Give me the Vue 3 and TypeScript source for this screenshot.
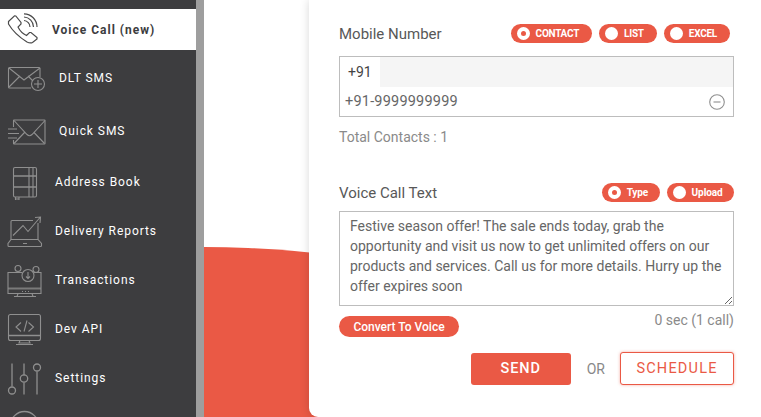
<script setup lang="ts">
const navItems = [
  { label: 'DLT SMS', icon: 'dlt' },
  { label: 'Quick SMS', icon: 'quick' },
  { label: 'Address Book', icon: 'book' },
  { label: 'Delivery Reports', icon: 'reports' },
  { label: 'Transactions', icon: 'trans' },
  { label: 'Dev API', icon: 'api' },
  { label: 'Settings', icon: 'settings' },
  { label: '', icon: 'more' },
]
const sources = [
  { label: 'CONTACT', on: true },
  { label: 'LIST', on: false },
  { label: 'EXCEL', on: false },
]
const modes = [
  { label: 'Type', on: true },
  { label: 'Upload', on: false },
]
const message =
  'Festive season offer! The sale ends today, grab the opportunity and visit us now to get unlimited offers on our products and services. Call us for more details. Hurry up the offer expires soon'
</script>

<template>
  <div class="page">
    <aside class="sidebar">
      <div class="active">
        <svg width="34" height="34" viewBox="0 0 34 34" fill="none" stroke="#4a4a4a" stroke-width="1.2">
          <path d="M1.500 8.500 7.500 2.800l1.300.2L14 9.500V11l-3 3c1.500 3 5 7 8.500 8.500l3-3H24l6 5V26l-4.500 3.500c-2 1-3.500.5-5.500-.5C12 24 5 17 1.500 11Z" />
          <path d="M17 7.500a6.500 6.500 0 0 1 6 6.500M17 4a10 10 0 0 1 9.500 10M17 .8A13.200 13.200 0 0 1 30 14" />
        </svg>
        <span>Voice Call (new)</span>
      </div>
      <div v-for="item in navItems" :key="item.icon" class="item" :class="item.icon">
        <svg width="44" height="44" viewBox="0 0 44 44" fill="none" stroke="#8f8f8f" stroke-width="1.100">
          <template v-if="item.icon === 'dlt'">
            <path d="M36 21V12.500a1 1 0 0 0-1-1H5.500a1 1 0 0 0-1 1V31a1 1 0 0 0 1 1H27" />
            <path d="m5 12 15 12L36 12M5 31l11-11M29 25l-5-5" />
            <circle cx="34" cy="28" r="6.500" />
            <path d="M34 24v8M30 28h8" />
          </template>
          <template v-else-if="item.icon === 'quick'">
            <path d="M9.500 18v-6.500a.5.500 0 0 1 .5-.5h30.500a.5.500 0 0 1 .5.500v23a.5.500 0 0 1-.5.500H10a.5.500 0 0 1-.5-.5V31" />
            <path d="m10 11.500 13 14c1.500 1.500 3.500 1.500 5 0l13-14M10 34.500l10.500-11M40.500 34.500 30 23.500" />
            <path d="M4 20h9M4 24.500h11M4 29h9" />
          </template>
          <template v-else-if="item.icon === 'book'">
            <rect x="9.500" y="7.500" width="23" height="29.500" rx="1.500" />
            <path d="M25 7.500V37M29 7.500V37M11.500 37v3M15 37v3M11.500 39h3.500" />
            <path d="M9.500 16h19.500M9.500 27h19.500M29 16h3.500M29 27h3.500" stroke-width="2" opacity=".75" />
          </template>
          <template v-else-if="item.icon === 'reports'">
            <path d="M7 30.500V12.500a1 1 0 0 1 1-1h21M34 14v16.500" />
            <path d="M7 30.500h27l3.500 4v2a1 1 0 0 1-1 1H5a1 1 0 0 1-1-1v-2ZM19 34.500h4" />
            <path d="m9 26.500 10-10 5 6 12-14M31 8.500l5.500-.5-.5 6" />
          </template>
          <template v-else-if="item.icon === 'trans'">
            <path d="M18 14.500H4v21h33v-21h-7" />
            <path d="M4 30.500h33" stroke-width="2" opacity=".75" />
            <path d="m14 35.500-1 3h16l-1-3M10 38.500h22M18 33.500h1M21 33.500h1M24 33.500h1" />
            <circle cx="24" cy="17.500" r="6" />
            <path d="M24 14v6.500M22 18.500l2 2 2-2" />
            <circle cx="14" cy="10.500" r="3" />
            <circle cx="32" cy="11.500" r="3" />
          </template>
          <template v-else-if="item.icon === 'api'">
            <rect x="4.500" y="7.500" width="32" height="26" rx="2" />
            <path d="M4.500 28.500h32" stroke-width="1.500" />
            <path d="m16 33.500-1 2.500h11l-1-2.500M12 37.500h17" />
            <path d="m17 15.500-5 4.500 5 4.500M23 13.500l-3 11M24.500 15.500l5 4.500-5 4.500" />
          </template>
          <template v-else-if="item.icon === 'settings'">
            <path d="M8 7.500v23M20 7.500v12M20 26.500v12M33 15.500v23" stroke-width="1.300" />
            <circle cx="8" cy="34.500" r="3.500" stroke-width="1.300" />
            <circle cx="20" cy="22.500" r="3.700" stroke-width="1.300" />
            <circle cx="33" cy="11.500" r="3.500" stroke-width="1.300" />
          </template>
          <template v-else>
            <circle cx="20.500" cy="20.500" r="14" stroke-width="1.300" />
          </template>
        </svg>
        <span v-if="item.label">{{ item.label }}</span>
      </div>
    </aside>
    <div class="scroll"></div>
    <main class="content">
      <div class="blob"></div>
      <section class="card">
        <div class="head first">
          <label>Mobile Number</label>
          <div class="pills inset">
            <span v-for="s in sources" :key="s.label" class="pill upper">
              <i :class="{ on: s.on }"></i>{{ s.label }}
            </span>
          </div>
        </div>
        <div class="numbers">
          <div class="code-row"><span>+91</span></div>
          <div class="num-row">
            <span>+91-9999999999</span>
            <svg width="16" height="16" viewBox="0 0 16 16" fill="none" stroke="#8f8f8f" stroke-width="1.100">
              <circle cx="8" cy="8" r="7.300" />
              <path d="M4.500 8h7" />
            </svg>
          </div>
        </div>
        <div class="total">Total Contacts : 1</div>
        <div class="head second">
          <label>Voice Call Text</label>
          <div class="pills">
            <span v-for="m in modes" :key="m.label" class="pill small">
              <i :class="{ on: m.on }"></i>{{ m.label }}
            </span>
          </div>
        </div>
        <textarea class="text" :value="message" spellcheck="false"></textarea>
        <div class="below">
          <button class="convert">Convert To Voice</button>
          <span class="secs">0 sec (1 call)</span>
        </div>
        <div class="actions">
          <button class="send">SEND</button>
          <span class="or">OR</span>
          <button class="schedule">SCHEDULE</button>
        </div>
      </section>
    </main>
  </div>
</template>

<style>
html, body { margin: 0; overflow: hidden; background: #fff; }
</style>

<style scoped>
.page { width: 761px; height: 417px; display: flex; overflow: hidden; font-family: Roboto, "Liberation Sans", sans-serif; }
.sidebar { width: 196px; flex: none; background: #3d3d3f; padding-top: 9px; box-sizing: border-box; overflow: hidden; }
.active { height: 41px; background: #fff; display: flex; align-items: center; padding-left: 7px; gap: 11px; color: #3d3d3f; font-size: 12px; font-weight: 700; letter-spacing: 1px; }
.item { display: flex; align-items: center; color: #fff; font-size: 12px; letter-spacing: .95px; height: 49px; padding-left: 4px; }
.item svg { flex: none; margin-right: 7px; }
.item.dlt { height: 55px; }
.item.quick { height: 52px; }
.item.book { height: 49px; }
.item.dlt svg, .item.quick svg { margin-right: 11px; }
.scroll { width: 8px; flex: none; background: #9e9e9e; }
.content { flex: 1; position: relative; overflow: hidden; background: #fff; padding-left: 105px; min-width: 0; }
.blob { position: absolute; left: -450px; top: 247px; width: 900px; height: 400px; border-radius: 50%; background: #ea5945; }
.card { position: relative; height: 417px; box-sizing: border-box; background: #fff; border-bottom-left-radius: 9px; box-shadow: 0 0 10px rgba(0,0,0,.16); padding: 0 27px 0 30px; color: #555; }
.head { display: flex; align-items: center; justify-content: space-between; font-size: 15px; }
.head label { color: #585858; }
.first { padding-top: 23px; height: 21px; }
.second { margin-top: 37px; height: 21px; }
.pills { display: flex; gap: 7px; }
.pills.inset { margin-right: 4px; }
.pill { display: flex; align-items: center; background: #ea5945; color: #fff; height: 19px; border-radius: 10px; font-weight: 700; padding: 0 13px 0 6px; }
.pill i { width: 13px; height: 13px; border-radius: 50%; background: #fff; margin-right: 6px; position: relative; }
.pill i.on::after { content: ""; position: absolute; left: 4px; top: 4px; width: 5px; height: 5px; border-radius: 50%; background: #ea5945; }
.upper { font-size: 10px; letter-spacing: -.25px; }
.small { font-size: 10px; padding-right: 11.500px; letter-spacing: -.1px; }
.numbers { margin-top: 12px; border: 1px solid #bdbdbd; height: 61px; box-sizing: border-box; }
.code-row { height: 30px; background: #f5f5f5; }
.code-row span { display: block; width: 40px; height: 30px; line-height: 30px; background: #fff; padding-left: 8px; box-sizing: border-box; font-size: 14px; color: #444; }
.num-row { display: flex; align-items: center; justify-content: space-between; padding: 0 8px 0 5px; height: 29px; font-size: 14.500px; letter-spacing: .2px; color: #666; }
.total { margin-top: 12px; font-size: 14px; color: #8a8a8a; }
.text { display: block; margin-top: 8px; width: 100%; height: 95px; box-sizing: border-box; border: 1px solid #bdbdbd; padding: 4px 6px 4px 10px; font: 14px/20px Roboto, sans-serif; color: #666; resize: vertical; outline: none; overflow: hidden; }
.below { display: flex; justify-content: space-between; align-items: flex-start; margin-top: 10px; }
.convert { border: 0; height: 21px; width: 120px; padding: 0; border-radius: 11px; background: #ea5945; color: #fff; font: 500 12px Roboto, sans-serif; }
.secs { font-size: 14px; color: #8a8a8a; margin-top: -4px; }
.actions { display: flex; align-items: center; justify-content: flex-end; margin-top: 15px; }
.send { width: 100px; height: 32px; border: 0; border-radius: 3px; background: #ea5945; color: #fff; font: 500 14.500px Roboto, sans-serif; letter-spacing: .9px; }
.or { margin: 0 15px 0 16px; font-size: 14px; color: #888; }
.schedule { width: 114px; height: 33px; border: 1px solid #ea5945; border-radius: 3px; background: #fff; color: #ea5945; font: 400 14.500px Roboto, sans-serif; letter-spacing: 1.2px; box-shadow: 0 0 3px rgba(234,89,69,.5); }
</style>
